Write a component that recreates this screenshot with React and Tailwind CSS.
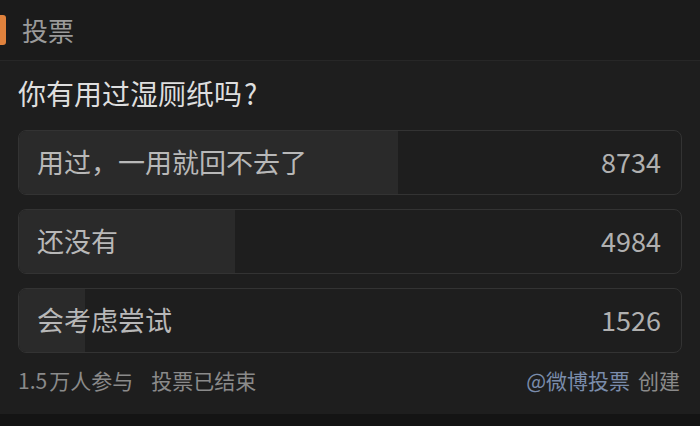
import React from "react";

const options = [
  { label: "用过，一用就回不去了", count: 8734 },
  { label: "还没有", count: 4984 },
  { label: "会考虑尝试", count: 1526 },
];

const total = options.reduce((s, o) => s + o.count, 0);

function OptionRow({ label, count }) {
  const pct = (count / total) * 100;
  return (
    <div className="relative h-[65px] overflow-hidden rounded-[8px] border border-[#333] bg-[#1e1e1e]">
      {/* progress fill */}
      <div className="absolute inset-y-0 left-0 bg-[#2a2a2a]" style={{ width: `${pct}%` }} />
      <div className="relative flex h-full items-center justify-between pl-[18px] pr-[20px]">
        <span className="text-[27px] text-[#b8b8b8]">{label}</span>
        <span className="text-[27px] text-[#b0b0b0]">{count}</span>
      </div>
    </div>
  );
}

export default function App() {
  return (
    <div
      className="flex h-[426px] w-[700px] flex-col bg-[#1e1e1e]"
      style={{ fontFamily: '"Noto Sans CJK SC", "Noto Sans", sans-serif' }}
    >
      {/* header */}
      <div className="flex h-[61px] items-center border-b border-[#272727] bg-[#1b1b1b]">
        <div className="h-[30px] w-[6px] rounded-r-[3px] bg-[#e0823d]" />
        <span className="ml-[16px] text-[26px] leading-none text-[#9a9a9a]">投票</span>
      </div>

      <div className="flex flex-1 flex-col px-[18px]">
        <div className="mt-[14px] text-[28px] leading-[36px] text-[#dedede]">
          你有用过湿厕纸吗<span className="ml-[2px]">?</span>
        </div>

        <div className="mt-[19px] flex flex-col gap-[14px]">
          {options.map((o) => (
            <OptionRow key={o.label} {...o} />
          ))}
        </div>

        <div className="mt-[12px] flex items-center justify-between text-[21px] leading-[30px]">
          <div className="text-[#8a8a8a]">
            <span>1.5</span>
            <span className="ml-[2px]">万人参与</span>
            <span className="ml-[18px]">投票已结束</span>
          </div>
          <div className="pr-[2px]">
            <span className="text-[#7a8cab]">@微博投票</span>
            <span className="ml-[8px] text-[#8a8a8a]">创建</span>
          </div>
        </div>
      </div>

      <div className="h-[12px] bg-[#141414]" />
    </div>
  );
}
